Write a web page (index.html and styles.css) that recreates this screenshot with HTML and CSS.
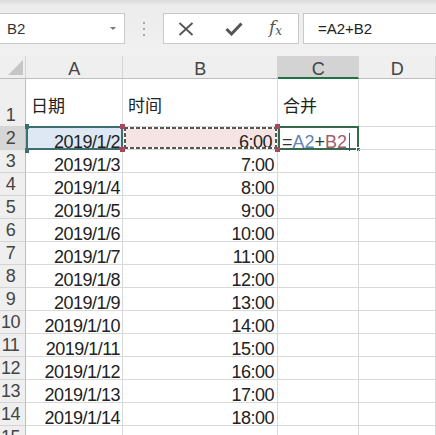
FILE: index.html
```html
<!DOCTYPE html>
<html>
<head>
<meta charset="utf-8">
<link rel="stylesheet" href="styles.css">
</head>
<body>
<div class="bar">
  <div class="namebox"><span class="ref">B2</span><span class="caret"></span></div>
  <div class="dots"><i></i><i></i><i></i></div>
  <div class="btns">
    <svg class="ico x" width="16" height="14" viewBox="0 0 16 14"><path d="M1.5 1 L14.5 13 M14.5 1 L1.5 13" stroke="#555" stroke-width="1.8" fill="none"/></svg>
    <svg class="ico ok" width="18" height="14" viewBox="0 0 18 14"><path d="M1.5 7 L6.5 12 L16.5 1.5" stroke="#555" stroke-width="3" fill="none"/></svg>
    <span class="fx">f<sub>x</sub></span>
  </div>
  <div class="formula">=A2+B2</div>
</div>
<div class="sheet">
  <div class="h corner"><span class="tri"></span></div>
  <div class="h col">A</div>
  <div class="h col">B</div>
  <div class="h col sel">C</div>
  <div class="h col">D</div>

  <div class="h row">1</div>
  <div class="c tall">日期</div>
  <div class="c tall">时间</div>
  <div class="c tall">合并</div>
  <div class="c"></div>

  <div class="h row rsel">2</div>
  <div class="c num refa">2019/1/2</div>
  <div class="c num time refb">6:00</div>
  <div class="c active">=<span class="ka">A2</span>+<span class="kb">B2</span><span class="cursor"></span></div>
  <div class="c"></div>

  <div class="h row">3</div><div class="c num">2019/1/3</div><div class="c num time">7:00</div><div class="c"></div><div class="c"></div>
  <div class="h row">4</div><div class="c num">2019/1/4</div><div class="c num time">8:00</div><div class="c"></div><div class="c"></div>
  <div class="h row">5</div><div class="c num">2019/1/5</div><div class="c num time">9:00</div><div class="c"></div><div class="c"></div>
  <div class="h row">6</div><div class="c num">2019/1/6</div><div class="c num time">10:00</div><div class="c"></div><div class="c"></div>
  <div class="h row">7</div><div class="c num">2019/1/7</div><div class="c num time">11:00</div><div class="c"></div><div class="c"></div>
  <div class="h row">8</div><div class="c num">2019/1/8</div><div class="c num time">12:00</div><div class="c"></div><div class="c"></div>
  <div class="h row">9</div><div class="c num">2019/1/9</div><div class="c num time">13:00</div><div class="c"></div><div class="c"></div>
  <div class="h row">10</div><div class="c num">2019/1/10</div><div class="c num time">14:00</div><div class="c"></div><div class="c"></div>
  <div class="h row">11</div><div class="c num">2019/1/11</div><div class="c num time">15:00</div><div class="c"></div><div class="c"></div>
  <div class="h row">12</div><div class="c num">2019/1/12</div><div class="c num time">16:00</div><div class="c"></div><div class="c"></div>
  <div class="h row">13</div><div class="c num">2019/1/13</div><div class="c num time">17:00</div><div class="c"></div><div class="c"></div>
  <div class="h row">14</div><div class="c num">2019/1/14</div><div class="c num time">18:00</div><div class="c"></div><div class="c"></div>
  <div class="h row">15</div><div class="c"></div><div class="c"></div><div class="c"></div><div class="c"></div>
</div>
</body>
</html>
```
FILE: styles.css
```css
*, *::before, *::after { box-sizing: border-box; }
html, body { margin: 0; padding: 0; background: #fff; overflow: hidden; }
body {
  font-family: "Liberation Sans", "Noto Sans CJK SC", sans-serif;
  color: #222;
  width: 436px;
  height: 435px;
}
.bar {
  height: 56px;
  background: linear-gradient(#dadada 0, #ececec 5px, #f1f1f1 100%);
  display: flex;
  align-items: flex-start;
  padding-top: 13px;
}
.namebox {
  width: 125px;
  height: 31px;
  background: #fff;
  border: 1px solid #c9c9c9;
  border-left: none;
  display: flex;
  align-items: center;
  justify-content: space-between;
  padding: 0 8px 0 7px;
}
.ref { font-size: 15px; color: #333; }
.caret {
  width: 0; height: 0;
  border-left: 3px solid transparent;
  border-right: 3px solid transparent;
  border-top: 3px solid #777;
}
.dots {
  width: 38px;
  height: 31px;
  display: flex;
  flex-direction: column;
  align-items: center;
  justify-content: center;
  gap: 4px;
}
.dots i { display: block; width: 2px; height: 2px; background: #a8a8a8; }
.btns {
  width: 136px;
  height: 31px;
  background: #fff;
  border: 1px solid #c9c9c9;
  display: flex;
  align-items: center;
  padding-left: 14px;
}
.ok { margin-left: 31px; }
.fx {
  font-family: "DejaVu Serif", "Liberation Serif", serif;
  font-style: italic;
  color: #555;
  font-size: 17px;
  margin-left: 26px;
  line-height: 20px;
}
.fx sub { font-size: 12px; vertical-align: -2px; }
.formula {
  flex: 1;
  margin-left: 4px;
  height: 31px;
  background: #fff;
  border: 1px solid #c9c9c9;
  border-right: none;
  font-size: 15px;
  color: #222;
  padding-left: 14px;
  line-height: 29px;
}
.sheet {
  display: grid;
  grid-template-columns: 26px 97px 155px 81px 1fr;
  grid-template-rows: 23px 48px repeat(14, 23px);
  font-size: 18px;
}
.h {
  background: #efefef;
  color: #444;
  border-right: 1px solid #d4d4d4;
  border-bottom: 1px solid #d4d4d4;
  letter-spacing: -0.5px;
}
.corner { position: relative; border-bottom-color: #bdbdbd; }
.tri {
  position: absolute;
  right: 2px; bottom: 3px;
  width: 0; height: 0;
  border-left: 15px solid transparent;
  border-bottom: 15px solid #c6c6c6;
}
.col {
  text-align: center;
  line-height: 22px;
  padding-top: 2px;
  border-bottom-color: #bdbdbd;
}
.col.sel { background: #d3d3d3; border-bottom: 2px solid #217346; }
.row {
  display: flex;
  align-items: flex-end;
  justify-content: center;
  padding-right: 4px;
  padding-bottom: 1px;
  line-height: 20px;
  border-right-color: #bdbdbd;
}
.rsel { background: #d6d6d6; }
.c {
  border-right: 1px solid #d9d9d9;
  border-bottom: 1px solid #d9d9d9;
  line-height: 22px;
  padding: 4px 3px 0;
  white-space: nowrap;
  position: relative;
  color: #222;
  letter-spacing: -0.5px;
}
.tall {
  font-family: "Noto Sans CJK SC", sans-serif;
  font-size: 17px;
  letter-spacing: 0;
  line-height: 22px;
  padding: 15px 0 0 5px;
  color: #222;
}
.num { text-align: right; padding-right: 2px; }
.num.time { padding-right: 3px; }
.refa { background: #dde8f4; }
.refa::before {
  content: "";
  position: absolute;
  left: 0; top: -1px; right: -1px; bottom: -1px;
  border: 2px solid #3e6d70;
}
.refa::after {
  content: "";
  position: absolute;
  left: -1px; top: -3px;
  width: 4px; height: 29px;
  border-top: 5px solid #3e6d70;
  border-bottom: 5px solid #3e6d70;
}
.refb { background: #f6e4e4; }
.num.time.refb { padding-right: 5px; }
.refb::before {
  content: "";
  position: absolute;
  left: 1px; top: 0; right: 0; bottom: 0;
  background:
    repeating-linear-gradient(90deg, #4f5a4c 0 4px, #fff 4px 6px) top left / 100% 2px no-repeat,
    repeating-linear-gradient(90deg, #4f5a4c 0 4px, #fff 4px 6px) bottom left / 100% 2px no-repeat,
    repeating-linear-gradient(180deg, #4f5a4c 0 4px, #fff 4px 6px) top left / 2px 100% no-repeat,
    repeating-linear-gradient(180deg, #4f5a4c 0 4px, #fff 4px 6px) top right / 2px 100% no-repeat;
}
.refb::after {
  content: "";
  position: absolute;
  left: -3px; right: -3px; top: -3px; bottom: -3px;
  background:
    linear-gradient(#a4475f, #a4475f) top left / 5px 5px no-repeat,
    linear-gradient(#a4475f, #a4475f) bottom left / 5px 5px no-repeat,
    linear-gradient(#a4475f, #a4475f) top right / 5px 5px no-repeat,
    linear-gradient(#a4475f, #a4475f) bottom right / 5px 5px no-repeat;
  z-index: 2;
}
.active { padding-left: 4px; color: #333; letter-spacing: 0; }
.active::before {
  content: "";
  position: absolute;
  left: 0; top: -1px; right: -1px; bottom: -1px;
  border: 2px solid #36694b;
}
.active::after {
  content: "";
  position: absolute;
  right: -3px; bottom: -3px;
  width: 5px; height: 5px;
  background: #36694b;
  border: 1px solid #fff;
}
.ka { color: #6384b4; }
.kb { color: #a05c6c; }
.cursor {
  display: inline-block;
  width: 1px; height: 18px;
  background: #555;
  vertical-align: -3px;
  margin-left: 2px;
}
```
